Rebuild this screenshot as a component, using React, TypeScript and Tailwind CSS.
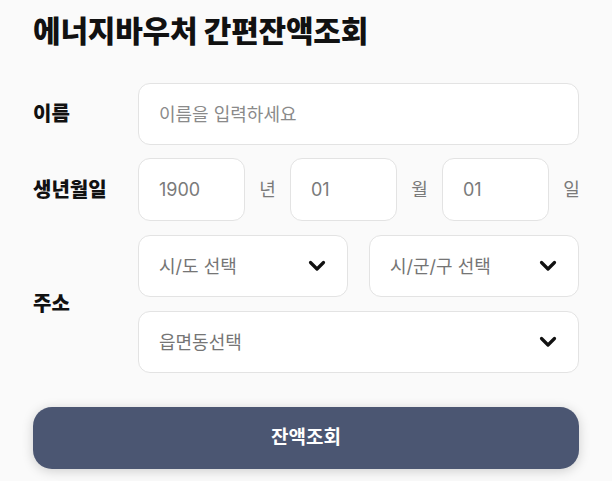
import React from "react";

const font = {
  fontFamily: 'Inter, "Noto Sans CJK KR", "Noto Sans", sans-serif',
};

function Chevron() {
  return (
    <svg width="18" height="12" viewBox="0 0 18 12" fill="none">
      <path
        d="M2.5 2.5 L9 9 L15.5 2.5"
        stroke="#111"
        strokeWidth="3.2"
        strokeLinecap="round"
        strokeLinejoin="round"
      />
    </svg>
  );
}

function SelectBox({ label, className }: { label: string; className: string }) {
  return (
    <button
      className={
        "h-[62px] flex items-center justify-between pl-[20px] pr-[21px] bg-white border border-[#e3e3e3] rounded-[12px] text-[18px] text-[#757575] " +
        className
      }
    >
      <span>{label}</span>
      <Chevron />
    </button>
  );
}

function DateBox({ value, unit }: { value: string; unit: string }) {
  return (
    <>
      <div className="w-[107px] shrink-0 h-[63px] flex items-center pl-[20px] bg-white border border-[#e3e3e3] rounded-[12px] text-[18px] text-[#7a7a7a]">
        {value}
      </div>
      <span className="w-[45px] shrink-0 text-center text-[18px] text-[#7a7a7a]">
        {unit}
      </span>
    </>
  );
}

export default function App() {
  return (
    <div
      className="min-h-screen bg-[#fafafa] px-[33px] pt-[12px] text-[#111]"
      style={font}
    >
      <h1 className="text-[30px] font-extrabold leading-[38px] tracking-[-0.2px]">
        에너지바우처 간편잔액조회
      </h1>

      <div className="mt-[33px] flex items-center">
        <label className="w-[105px] shrink-0 text-[20px] font-extrabold">이름</label>
        <div className="flex-1 h-[62px] flex items-center pl-[20px] bg-white border border-[#e3e3e3] rounded-[12px] text-[18px] text-[#8a8a8a]">
          이름을 입력하세요
        </div>
      </div>

      <div className="mt-[13px] flex items-center">
        <label className="w-[105px] shrink-0 text-[20px] font-extrabold">생년월일</label>
        <DateBox value="1900" unit="년" />
        <DateBox value="01" unit="월" />
        <DateBox value="01" unit="일" />
      </div>

      <div className="mt-[14px] flex items-center">
        <label className="w-[105px] shrink-0 text-[20px] font-extrabold">주소</label>
        <div className="flex-1 flex flex-col gap-[14px]">
          <div className="flex gap-[21px]">
            <SelectBox label="시/도 선택" className="flex-1" />
            <SelectBox label="시/군/구 선택" className="flex-1" />
          </div>
          <SelectBox label="읍면동선택" className="w-full" />
        </div>
      </div>

      <button className="mt-[34px] w-full h-[62px] rounded-[19px] bg-[#4b5672] text-white text-[19px] font-bold shadow-[0_2px_12px_rgba(0,0,0,0.18)]">
        잔액조회
      </button>
    </div>
  );
}
